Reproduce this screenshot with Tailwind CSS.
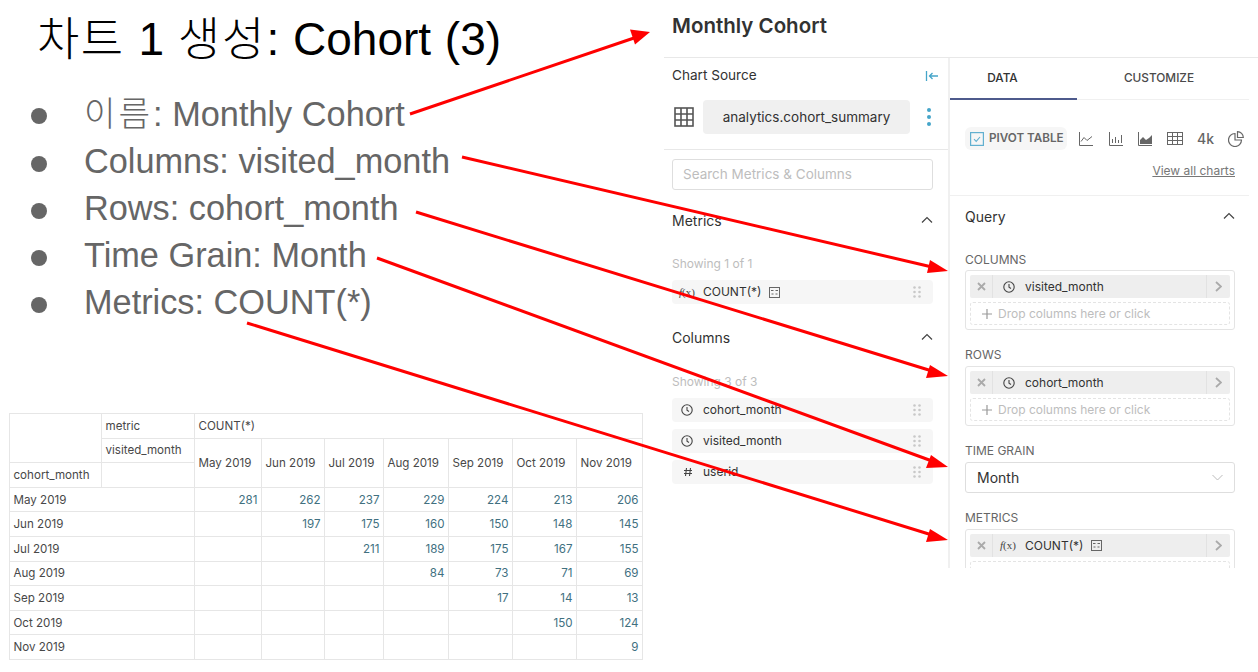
<!DOCTYPE html>
<html lang="en">
<head>
    <meta charset="UTF-8">
    <title>Cohort</title>
    <script src="https://cdn.jsdelivr.net/npm/@tailwindcss/browser@4"></script>
</head>
<body class="bg-white">
<div class="relative flex w-[1258px] h-[672px] overflow-hidden font-['Inter','Noto_Sans_CJK_KR',sans-serif]">

    <!-- slide -->
    <div class="w-[664px] shrink-0">
        <h1 class="h-[80px] pl-[37px] pt-[9px] text-[46px] leading-[60px] text-black [word-spacing:1px] font-['Liberation_Sans','Noto_Sans_CJK_KR',sans-serif]"><span class="font-light tracking-[1.5px]">차트</span> 1 <span class="font-light tracking-[2px]">생성</span>: Cohort (3)</h1>
        <ul class="pt-[10px] pl-[31px] text-[34.3px] leading-[47px] text-[#666666] font-['Liberation_Sans','Noto_Sans_CJK_KR',sans-serif]">
            <li class="flex items-center h-[48px]"><span class="w-[16px] h-[16px] rounded-full bg-[#666666] mr-[37px] mt-[4px]"></span><span class="font-light tracking-[3px]">이름</span>: Monthly Cohort</li>
            <li class="flex items-center h-[47px]"><span class="w-[16px] h-[16px] rounded-full bg-[#666666] mr-[37px] mt-[4px]"></span>Columns: visited_month</li>
            <li class="flex items-center h-[47px]"><span class="w-[16px] h-[16px] rounded-full bg-[#666666] mr-[37px] mt-[4px]"></span>Rows: cohort_month</li>
            <li class="flex items-center h-[47px]"><span class="w-[16px] h-[16px] rounded-full bg-[#666666] mr-[37px] mt-[4px]"></span>Time Grain: Month</li>
            <li class="flex items-center h-[47px]"><span class="w-[16px] h-[16px] rounded-full bg-[#666666] mr-[37px] mt-[4px]"></span>Metrics: COUNT(*)</li>
        </ul>
        <table class="mt-[87px] ml-[9px] w-[633px] table-fixed border-collapse text-[11.6px] leading-[16px] text-[#484848] [&_td]:border [&_td]:border-[#e6e6e6] [&_td]:px-[3.5px] [&_td]:h-[24.6px] [&_td]:p-0">
            <colgroup>
                <col class="w-[92px]"><col class="w-[93px]"><col class="w-[67px]"><col class="w-[63px]"><col class="w-[59px]"><col class="w-[65px]"><col class="w-[64px]"><col class="w-[64px]"><col class="w-[66px]">
            </colgroup>
            <tbody class="[&_td.v]:text-right [&_td.v]:text-[#41707f]">
                <tr><td rowspan="2"></td><td>metric</td><td colspan="7">COUNT(*)</td></tr>
                <tr><td>visited_month</td><td rowspan="2">May 2019</td><td rowspan="2">Jun 2019</td><td rowspan="2">Jul 2019</td><td rowspan="2">Aug 2019</td><td rowspan="2">Sep 2019</td><td rowspan="2">Oct 2019</td><td rowspan="2">Nov 2019</td></tr>
                <tr><td>cohort_month</td><td></td></tr>
                <tr><td colspan="2">May 2019</td><td class="v">281</td><td class="v">262</td><td class="v">237</td><td class="v">229</td><td class="v">224</td><td class="v">213</td><td class="v">206</td></tr>
                <tr><td colspan="2">Jun 2019</td><td class="v"></td><td class="v">197</td><td class="v">175</td><td class="v">160</td><td class="v">150</td><td class="v">148</td><td class="v">145</td></tr>
                <tr><td colspan="2">Jul 2019</td><td class="v"></td><td class="v"></td><td class="v">211</td><td class="v">189</td><td class="v">175</td><td class="v">167</td><td class="v">155</td></tr>
                <tr><td colspan="2">Aug 2019</td><td class="v"></td><td class="v"></td><td class="v"></td><td class="v">84</td><td class="v">73</td><td class="v">71</td><td class="v">69</td></tr>
                <tr><td colspan="2">Sep 2019</td><td class="v"></td><td class="v"></td><td class="v"></td><td class="v"></td><td class="v">17</td><td class="v">14</td><td class="v">13</td></tr>
                <tr><td colspan="2">Oct 2019</td><td class="v"></td><td class="v"></td><td class="v"></td><td class="v"></td><td class="v"></td><td class="v">150</td><td class="v">124</td></tr>
                <tr><td colspan="2">Nov 2019</td><td class="v"></td><td class="v"></td><td class="v"></td><td class="v"></td><td class="v"></td><td class="v"></td><td class="v">9</td></tr>
            </tbody>
        </table>
    </div>

    <!-- explore panel -->
    <div class="w-[594px] shrink-0 text-[#323232]">
        <div class="h-[58px] border-b border-[#e8e8e8] pl-[8px] flex items-center pb-[4px] text-[20.5px] font-semibold text-[#323232]">Monthly Cohort</div>
        <div class="flex h-[510px]">
            <div class="w-[286px] shrink-0 border-r-2 border-[#f0f0f0]">
                <div class="h-[92px] border-b border-[#e8e8e8]">
                    <div class="flex items-center justify-between h-[35px] px-[8px] pr-[9px] text-[13.6px]">Chart Source
                        <svg class="w-[14px] h-[12px]" viewBox="0 0 14 12" fill="none" stroke="#45a5c9" stroke-width="1.3"><path d="M1.500 1v10M13 6H4.500M7.500 3 4.500 6l3 3"/></svg>
                    </div>
                    <div class="flex items-center h-[34px] mt-[7px] pl-[10px]">
                        <svg class="w-[20px] h-[20px]" viewBox="0 0 20 20" fill="none" stroke="#555" stroke-width="1.6"><rect x="1" y="1" width="18" height="18"/><path d="M7 1v18M13 1v18M1 7h18M1 13h18"/></svg>
                        <div class="ml-[9px] w-[207px] h-[34px] rounded-[4px] bg-[#f0f0f0] flex items-center justify-center text-[13.5px] text-[#323232]">analytics.cohort_summary</div>
                        <div class="ml-[17px] flex flex-col gap-[3px]"><span class="w-[4px] h-[4px] rounded-full bg-[#45a5c9]"></span><span class="w-[4px] h-[4px] rounded-full bg-[#45a5c9]"></span><span class="w-[4px] h-[4px] rounded-full bg-[#45a5c9]"></span></div>
                    </div>
                </div>
                <div class="mx-[8px] mt-[9px] w-[261px] h-[31px] border border-[#dedede] rounded-[3px] flex items-center px-[10px] text-[13.5px] text-[#bdbdbd]">Search Metrics &amp; Columns</div>

                <div class="flex items-center justify-between mt-[21px] h-[18px] pl-[8px] pr-[15px] text-[14px]">Metrics
                    <svg class="w-[12px] h-[8px]" viewBox="0 0 12 8" fill="none" stroke="#444" stroke-width="1.2"><path d="M1 6.500 6 1.500l5 5"/></svg>
                </div>
                <div class="pl-[8px] mt-[27px] h-[16px] leading-[16px] text-[12px] text-[#bdbdbd]">Showing 1 of 1</div>
                <div class="mx-[8px] mt-[8px] w-[261px] h-[24px] rounded-[4px] bg-[#f6f6f6] flex items-center text-[12px]">
                    <span class="w-[31px] pl-[7px] font-['Liberation_Serif',serif] text-[11px] text-[#444] shrink-0"><i>f</i>(x)</span>COUNT(*)
                    <svg class="ml-[8px] w-[11px] h-[11px]" viewBox="0 0 11 11" fill="none" stroke="#666"><rect x=".5" y=".5" width="10" height="10"/><path d="M2 3.500h2.500M6.500 3.500H9M2.500 7h2M6.500 7h2"/></svg>
                    <svg class="ml-auto mr-[12px] w-[8px] h-[12px]" viewBox="0 0 8 12" fill="#c8c8c8"><circle cx="1.500" cy="1.500" r="1.300"/><circle cx="6.500" cy="1.500" r="1.300"/><circle cx="1.500" cy="6" r="1.300"/><circle cx="6.500" cy="6" r="1.300"/><circle cx="1.500" cy="10.500" r="1.300"/><circle cx="6.500" cy="10.500" r="1.300"/></svg>
                </div>

                <div class="flex items-center justify-between mt-[24px] h-[18px] pl-[8px] pr-[15px] text-[14px]">Columns
                    <svg class="w-[12px] h-[8px]" viewBox="0 0 12 8" fill="none" stroke="#444" stroke-width="1.2"><path d="M1 6.500 6 1.500l5 5"/></svg>
                </div>
                <div class="pl-[8px] mt-[28px] h-[16px] leading-[16px] text-[12px] text-[#bdbdbd]">Showing 3 of 3</div>
                <div class="mx-[8px] mt-[8px] w-[261px] flex flex-col gap-[7.500px] text-[12px]">
                    <div class="h-[23.500px] rounded-[4px] bg-[#f6f6f6] flex items-center">
                        <svg class="w-[12px] h-[12px] ml-[9px] mr-[10px]" viewBox="0 0 12 12" fill="none" stroke="#444" stroke-width="1.100"><circle cx="6" cy="6" r="5.200"/><path d="M6 3v3.200l2 1.300"/></svg>cohort_month
                        <svg class="ml-auto mr-[12px] w-[8px] h-[12px]" viewBox="0 0 8 12" fill="#c8c8c8"><circle cx="1.500" cy="1.500" r="1.300"/><circle cx="6.500" cy="1.500" r="1.300"/><circle cx="1.500" cy="6" r="1.300"/><circle cx="6.500" cy="6" r="1.300"/><circle cx="1.500" cy="10.500" r="1.300"/><circle cx="6.500" cy="10.500" r="1.300"/></svg>
                    </div>
                    <div class="h-[23.500px] rounded-[4px] bg-[#f6f6f6] flex items-center">
                        <svg class="w-[12px] h-[12px] ml-[9px] mr-[10px]" viewBox="0 0 12 12" fill="none" stroke="#444" stroke-width="1.100"><circle cx="6" cy="6" r="5.200"/><path d="M6 3v3.200l2 1.300"/></svg>visited_month
                        <svg class="ml-auto mr-[12px] w-[8px] h-[12px]" viewBox="0 0 8 12" fill="#c8c8c8"><circle cx="1.500" cy="1.500" r="1.300"/><circle cx="6.500" cy="1.500" r="1.300"/><circle cx="1.500" cy="6" r="1.300"/><circle cx="6.500" cy="6" r="1.300"/><circle cx="1.500" cy="10.500" r="1.300"/><circle cx="6.500" cy="10.500" r="1.300"/></svg>
                    </div>
                    <div class="h-[23.500px] rounded-[4px] bg-[#f6f6f6] flex items-center">
                        <svg class="w-[10px] h-[10px] ml-[11px] mr-[10px]" viewBox="0 0 10 10" fill="none" stroke="#444" stroke-width="1.100"><path d="M3.500 1 2.500 9M7.500 1l-1 8M1 3.500h8M1 6.500h8"/></svg>userid
                        <svg class="ml-auto mr-[12px] w-[8px] h-[12px]" viewBox="0 0 8 12" fill="#c8c8c8"><circle cx="1.500" cy="1.500" r="1.300"/><circle cx="6.500" cy="1.500" r="1.300"/><circle cx="1.500" cy="6" r="1.300"/><circle cx="6.500" cy="6" r="1.300"/><circle cx="1.500" cy="10.500" r="1.300"/><circle cx="6.500" cy="10.500" r="1.300"/></svg>
                    </div>
                </div>
            </div>

            <div class="w-[300px] shrink-0 overflow-hidden">
                <div class="flex h-[42px] w-[299px] border-b border-[#f0f0f0] text-[11.8px] font-medium">
                    <div class="w-[127px] h-[42px] border-b-2 border-[#4d5a8c] flex items-center justify-center pr-[22px] pt-[1px]">DATA</div>
                    <div class="flex-1 h-[41px] flex items-center justify-center pr-[8px] text-[#4a4a4a]">CUSTOMIZE</div>
                </div>
                <div class="h-[96px] border-b border-[#f0f0f0] w-[299px] pl-[15px] pr-[14px] relative overflow-hidden">
                    <div class="flex items-center mt-[27px] h-[23px] w-[320px]">
                        <div class="w-[102px] h-[23px] rounded-[6px] bg-[#f6f6f6] flex items-center pl-[5px] text-[11.7px] font-semibold text-[#666] shrink-0">
                            <svg class="w-[14px] h-[14px] mr-[5px]" viewBox="0 0 14 14" fill="none"><rect x=".6" y=".6" width="12.800" height="12.800" stroke="#62b0d0" stroke-width="1.200"/><path d="M4 7.200 6.200 9.400 10 5" stroke="#62b0d0" stroke-width="1.100"/></svg>PIVOT TABLE
                        </div>
                        <svg class="ml-[12px] w-[14px] h-[14px]" viewBox="0 0 14 14" fill="none" stroke="#666"><path d="M.5 0v13.500H14M2 9.500l3-4 3 3 5-4"/></svg>
                        <svg class="ml-[16px] w-[14px] h-[14px]" viewBox="0 0 14 14" fill="none" stroke="#666"><path d="M.5 0v13.500H14M3.500 11V7M6.500 11V5M9.500 11V8M12.500 11V3"/></svg>
                        <svg class="ml-[15px] w-[14px] h-[14px]" viewBox="0 0 14 14"><path d="M.5 0v13.500H14" fill="none" stroke="#666"/><path d="M2 12V8l3-3 3 3 3-2 3-3v9z" fill="#666"/></svg>
                        <svg class="ml-[15px] w-[16px] h-[13px]" viewBox="0 0 16 13" fill="none" stroke="#666"><rect x=".5" y=".5" width="15" height="12"/><path d="M5.500 .5v12M10.500 .5v12M.5 4.500h15M.5 8.500h15"/></svg>
                        <span class="ml-[14px] text-[14px] text-[#666] font-medium leading-none">4k</span>
                        <svg class="ml-[14px] w-[16px] h-[16px]" viewBox="0 0 16 16" fill="none" stroke="#666" stroke-width="1.200"><path d="M7 2.500a6.500 6.500 0 1 0 6.500 6.500H7z"/><path d="M9.500 .7v5.800h5.800A5.800 5.800 0 0 0 9.500 .7z"/></svg>
                    </div>
                    <div class="text-right mt-[13px] leading-[16px] text-[12px] text-[#777] underline">View all charts</div>
                </div>
                <div class="w-[285px] pl-[15px]">
                    <div class="flex items-center justify-between h-[18px] mt-[11px] text-[14px]">Query
                        <svg class="w-[12px] h-[8px]" viewBox="0 0 12 8" fill="none" stroke="#444" stroke-width="1.200"><path d="M1 6.500 6 1.500l5 5"/></svg>
                    </div>

                    <div class="mt-[28px] h-[14px] leading-[14px] text-[12px] text-[#666]">COLUMNS</div>
                    <div class="mt-[3px] h-[60px] border border-[#e4e4e4] rounded-[3px] p-[4px] flex flex-col gap-[4px]">
                        <div class="h-[23px] bg-[#eeeeee] rounded-[2px] flex items-center text-[12px] shrink-0">
                            <span class="w-[23px] h-full border-r border-[#e2e2e2] flex items-center justify-center"><svg class="w-[9px] h-[9px]" viewBox="0 0 9 9" stroke="#aaa" stroke-width="1.800"><path d="M1 1l7 7M8 1 1 8"/></svg></span>
                            <svg class="w-[12px] h-[12px] ml-[10px] mr-[10px]" viewBox="0 0 12 12" fill="none" stroke="#444" stroke-width="1.100"><circle cx="6" cy="6" r="5.200"/><path d="M6 3v3.200l2 1.300"/></svg>visited_month
                            <span class="ml-auto w-[24px] h-full border-l border-[#e2e2e2] flex items-center justify-center"><svg class="w-[7px] h-[11px]" viewBox="0 0 7 11" fill="none" stroke="#aaa" stroke-width="1.800"><path d="M1 1l5 4.500-5 4.500"/></svg></span>
                        </div>
                        <div class="h-[23px] border border-dashed border-[#e4e4e4] rounded-[3px] flex items-center pl-[11px] text-[12px] text-[#bdbdbd]">
                            <svg class="w-[10px] h-[10px] mr-[6px]" viewBox="0 0 10 10" stroke="#999" stroke-width="1.200"><path d="M5 0v10M0 5h10"/></svg>Drop columns here or click
                        </div>
                    </div>

                    <div class="mt-[18px] h-[14px] leading-[14px] text-[12px] text-[#666]">ROWS</div>
                    <div class="mt-[4px] h-[60px] border border-[#e4e4e4] rounded-[3px] p-[4px] flex flex-col gap-[4px]">
                        <div class="h-[23px] bg-[#eeeeee] rounded-[2px] flex items-center text-[12px] shrink-0">
                            <span class="w-[23px] h-full border-r border-[#e2e2e2] flex items-center justify-center"><svg class="w-[9px] h-[9px]" viewBox="0 0 9 9" stroke="#aaa" stroke-width="1.800"><path d="M1 1l7 7M8 1 1 8"/></svg></span>
                            <svg class="w-[12px] h-[12px] ml-[10px] mr-[10px]" viewBox="0 0 12 12" fill="none" stroke="#444" stroke-width="1.100"><circle cx="6" cy="6" r="5.200"/><path d="M6 3v3.200l2 1.300"/></svg>cohort_month
                            <span class="ml-auto w-[24px] h-full border-l border-[#e2e2e2] flex items-center justify-center"><svg class="w-[7px] h-[11px]" viewBox="0 0 7 11" fill="none" stroke="#aaa" stroke-width="1.800"><path d="M1 1l5 4.500-5 4.500"/></svg></span>
                        </div>
                        <div class="h-[23px] border border-dashed border-[#e4e4e4] rounded-[3px] flex items-center pl-[11px] text-[12px] text-[#bdbdbd]">
                            <svg class="w-[10px] h-[10px] mr-[6px]" viewBox="0 0 10 10" stroke="#999" stroke-width="1.200"><path d="M5 0v10M0 5h10"/></svg>Drop columns here or click
                        </div>
                    </div>

                    <div class="mt-[18px] h-[14px] leading-[14px] text-[12px] text-[#666]">TIME GRAIN</div>
                    <div class="mt-[4px] h-[31px] border border-[#dedede] rounded-[3px] flex items-center justify-between pl-[11px] pr-[11px] text-[14px]">Month
                        <svg class="w-[11px] h-[7px]" viewBox="0 0 11 7" fill="none" stroke="#bbb"><path d="M.5 1l5 5 5-5"/></svg>
                    </div>

                    <div class="mt-[18px] h-[14px] leading-[14px] text-[12px] text-[#666]">METRICS</div>
                    <div class="mt-[4px] h-[60px] border border-[#e4e4e4] rounded-[3px] p-[4px] flex flex-col gap-[4px]">
                        <div class="h-[23px] bg-[#eeeeee] rounded-[2px] flex items-center text-[12px] shrink-0">
                            <span class="w-[23px] h-full border-r border-[#e2e2e2] flex items-center justify-center"><svg class="w-[9px] h-[9px]" viewBox="0 0 9 9" stroke="#aaa" stroke-width="1.800"><path d="M1 1l7 7M8 1 1 8"/></svg></span>
                            <span class="w-[32px] pl-[7px] font-['Liberation_Serif',serif] text-[11px] text-[#444] shrink-0"><i>f</i>(x)</span>COUNT(*)
                            <svg class="ml-[8px] w-[11px] h-[11px]" viewBox="0 0 11 11" fill="none" stroke="#666"><rect x=".5" y=".5" width="10" height="10"/><path d="M2 3.500h2.500M6.500 3.500H9M2.500 7h2M6.500 7h2"/></svg>
                            <span class="ml-auto w-[24px] h-full border-l border-[#e2e2e2] flex items-center justify-center"><svg class="w-[7px] h-[11px]" viewBox="0 0 7 11" fill="none" stroke="#aaa" stroke-width="1.800"><path d="M1 1l5 4.500-5 4.500"/></svg></span>
                        </div>
                        <div class="h-[23px] border border-dashed border-[#e4e4e4] rounded-[3px]"></div>
                    </div>
                </div>
            </div>
        </div>
    </div>

    <!-- red arrows over everything -->
    <svg class="absolute inset-0 pointer-events-none" width="1258" height="672" viewBox="0 0 1258 672" fill="none" stroke="#ff0000" stroke-width="3">
        <path d="M410 114 634 38"/><path d="M650 32 630 29.500l5 15z" fill="#ff0000" stroke="none"/>
        <path d="M462 157 932 267"/><path d="M948 271 930 260l-3 13z" fill="#ff0000" stroke="none"/>
        <path d="M416 212 932 371"/><path d="M948 376 930 365l-4 13z" fill="#ff0000" stroke="none"/>
        <path d="M377 258 932 461"/><path d="M948 467 931 455l-5 13z" fill="#ff0000" stroke="none"/>
        <path d="M247 323 932 535"/><path d="M948 540 930 529l-4 13z" fill="#ff0000" stroke="none"/>
    </svg>
</div>
</body>
</html>
